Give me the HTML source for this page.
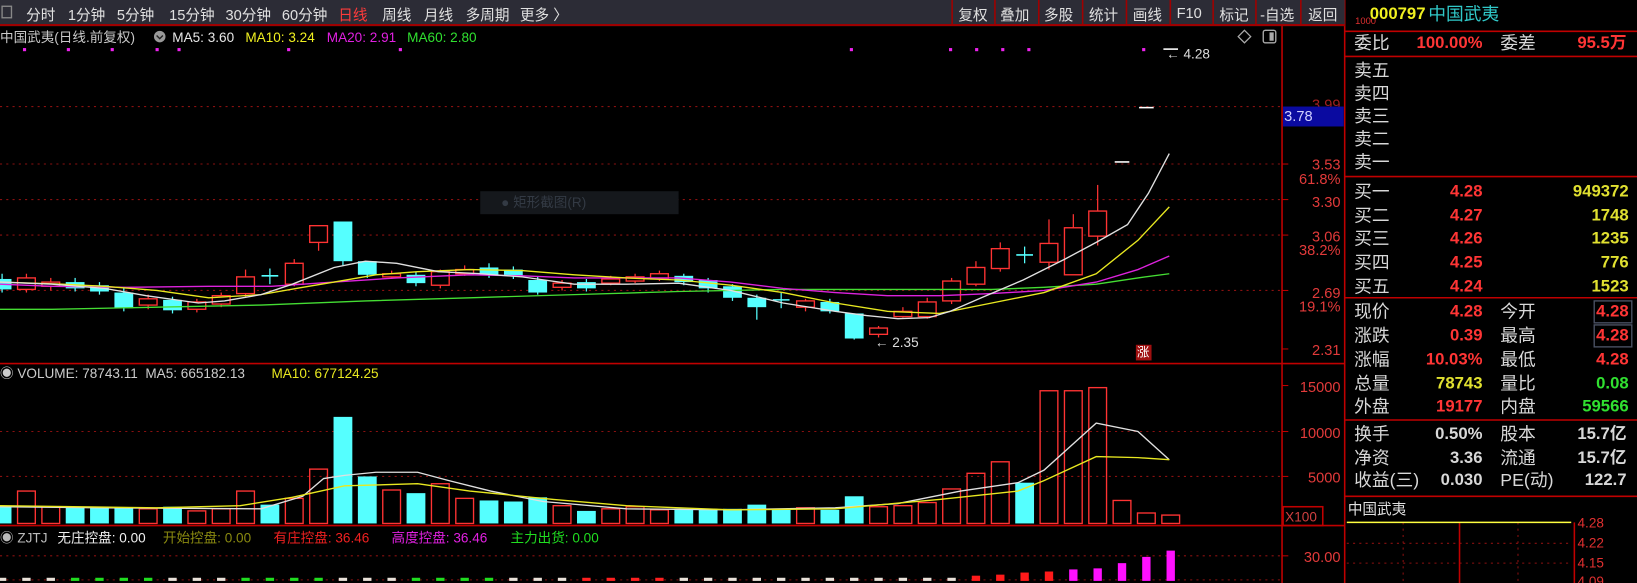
<!DOCTYPE html>
<html><head><meta charset="utf-8">
<style>
html,body{margin:0;padding:0;background:#000;overflow:hidden;width:1637px;height:583px}
#f{position:absolute;left:0;top:0;width:1568px;height:558px;transform:scale(1.04401,1.0448);transform-origin:0 0;background:#000;font-family:"Liberation Sans","Noto Sans CJK SC",sans-serif;overflow:hidden}
.t{position:absolute;white-space:nowrap;line-height:1}
#tb{position:absolute;left:0;top:0;width:1288px;height:23px;background:#2c2c36;border-bottom:2px solid #a00000}
#tb span{position:absolute;top:4px;font-size:14px;color:#e0e0e0;white-space:nowrap}
.ax{position:absolute;font-size:14px;color:#e23a3a;text-align:right;width:56px;left:1228px;line-height:1}
.rp{position:absolute;font-size:17px;color:#d8d8d8;line-height:1;white-space:nowrap}
.rv{position:absolute;font-size:16px;font-weight:bold;line-height:1;text-align:right;width:110px;white-space:nowrap}
</style></head><body>
<div id="f">
<svg id="sv" width="1568" height="558" style="position:absolute;left:0;top:0">
<g stroke="#8a1010" stroke-dasharray="2,4" stroke-width="1">
<line x1="0" y1="102" x2="1228" y2="102"/><line x1="0" y1="157" x2="1228" y2="157"/><line x1="0" y1="191" x2="1228" y2="191"/><line x1="0" y1="225" x2="1228" y2="225"/><line x1="0" y1="278" x2="1228" y2="278"/>
<line x1="0" y1="413" x2="1228" y2="413"/><line x1="0" y1="456" x2="1228" y2="456"/>
<line x1="0" y1="532" x2="1228" y2="532"/><line x1="0" y1="555" x2="1228" y2="555"/>
<line x1="1290" y1="520" x2="1505" y2="520"/><line x1="1290" y1="539" x2="1505" y2="539"/>
<line x1="1344" y1="500" x2="1344" y2="558"/><line x1="1454" y1="500" x2="1454" y2="558"/>
</g>
<g stroke="#c00000" stroke-width="1.5" fill="none">
<line x1="0" y1="348" x2="1288" y2="348"/><line x1="0" y1="503" x2="1288" y2="503"/>
<line x1="1228" y1="23" x2="1228" y2="558"/><line x1="1288" y1="0" x2="1288" y2="558"/>
<line x1="1288" y1="30" x2="1568" y2="30"/><line x1="1288" y1="54" x2="1568" y2="54"/><line x1="1288" y1="169" x2="1568" y2="169"/><line x1="1288" y1="285" x2="1568" y2="285"/><line x1="1288" y1="402" x2="1568" y2="402"/><line x1="1288" y1="475" x2="1568" y2="475"/>
<line x1="1398" y1="500" x2="1398" y2="558"/><line x1="1508" y1="500" x2="1508" y2="558"/>
<rect x="1229" y="485" width="38" height="18"/>
<g stroke-width="1"><line x1="1228" y1="157" x2="1234" y2="157"/><line x1="1228" y1="191" x2="1234" y2="191"/><line x1="1228" y1="225" x2="1234" y2="225"/><line x1="1228" y1="278" x2="1234" y2="278"/><line x1="1228" y1="334" x2="1234" y2="334"/><line x1="1228" y1="369" x2="1234" y2="369"/><line x1="1228" y1="413" x2="1234" y2="413"/><line x1="1228" y1="456" x2="1234" y2="456"/><line x1="1228" y1="532" x2="1234" y2="532"/></g>
</g>
<line x1="1290" y1="500" x2="1505" y2="500" stroke="#ffff40" stroke-width="1.5"/>
<rect x="460" y="183" width="190" height="22" fill="#15181c"/>
<g id="cand"></g>
<g fill="none" stroke-width="1.3">
<polyline stroke="#44dd33" points="0,296 50,296 150,294 250,292 350,288 450,285 550,282 650,279 750,277 850,277 950,277 1000,275 1050,272 1090,266 1120,262"/>
<polyline stroke="#dd22dd" points="0,272 50,274 120,275 200,274 260,274 320,270 380,266 450,263 500,264 550,266 650,266 700,270 750,276 800,280 850,283 900,283 950,281 1000,278 1050,270 1090,258 1120,245"/>
<polyline stroke="#e8e820" points="0,270 60,272 100,274 150,278 200,285 250,282 290,275 320,270 360,263 400,260 450,258 500,259 550,263 600,266 650,268 700,273 750,280 800,290 850,298 900,300 950,290 1000,280 1050,262 1090,230 1120,198"/>
<polyline stroke="#e0e0e0" points="0,270 50,272 100,276 140,283 190,290 215,288 250,282 280,272 320,256 350,250 380,252 420,260 460,262 500,265 550,272 600,272 650,271 700,278 750,290 800,298 830,302 860,305 890,304 910,298 940,285 980,268 1020,248 1050,232 1080,215 1100,185 1120,147"/>
<polyline stroke="#e0e0e0" points="0,485 100,486 250,487 290,475 310,458 330,455 360,452 400,452 430,460 470,470 520,480 600,487 700,488 800,486 860,482 920,470 975,462 1000,450 1050,405 1090,413 1120,440"/>
<polyline stroke="#e8e820" points="0,484 150,486 230,484 280,476 330,465 400,463 450,470 530,478 600,484 700,488 800,487 900,478 975,470 1000,460 1050,437 1090,438 1120,440"/>
</g>
<g fill="#ee22ee"><rect x="22" y="46" width="3" height="3"/><rect x="64" y="46" width="3" height="3"/><rect x="106" y="46" width="3" height="3"/><rect x="149" y="46" width="3" height="3"/><rect x="170" y="46" width="3" height="3"/><rect x="275" y="46" width="3" height="3"/><rect x="382" y="46" width="3" height="3"/><rect x="814" y="46" width="3" height="3"/><rect x="909" y="46" width="3" height="3"/><rect x="934" y="46" width="3" height="3"/><rect x="959" y="46" width="3" height="3"/><rect x="984" y="46" width="3" height="3"/><rect x="1094" y="46" width="3" height="3"/></g>
<path d="M1192 29 l6 6 -6 6 -6 -6z" fill="none" stroke="#aaa" stroke-width="1.2"/>
<rect x="1210" y="29" width="12" height="12" rx="2" fill="none" stroke="#aaa" stroke-width="1.3"/><rect x="1216" y="31" width="4" height="8" fill="#aaa"/>
<circle cx="153" cy="35" r="5.5" fill="#999"/><path d="M150 34 l3 3 3-3" stroke="#222" fill="none" stroke-width="1.3"/>
<rect x="1527" y="288" width="36" height="21" fill="none" stroke="#4b5264" stroke-width="1.3"/>
<rect x="1527" y="311" width="36" height="21" fill="none" stroke="#4b5264" stroke-width="1.3"/>
<rect x="1229" y="102" width="58" height="19" fill="#0a0aa0"/>
<rect x="1088" y="330" width="15" height="15" fill="#a01010"/>
</svg>

<div id="tb">
<span style="left:25px">分时</span><span style="left:65px">1分钟</span><span style="left:112px">5分钟</span><span style="left:162px">15分钟</span><span style="left:216px">30分钟</span><span style="left:270px">60分钟</span><span style="left:324px;color:#ff3b3b">日线</span><span style="left:366px">周线</span><span style="left:406px">月线</span><span style="left:446px">多周期</span><span style="left:498px">更多 〉</span>
<span style="left:918px">复权</span><span style="left:958px">叠加</span><span style="left:1000px">多股</span><span style="left:1043px">统计</span><span style="left:1085px">画线</span><span style="left:1127px">F10</span><span style="left:1168px">标记</span><span style="left:1207px">-自选</span><span style="left:1253px">返回</span>
</div>
<svg width="1288" height="23" style="position:absolute;left:0;top:0"><rect x="2" y="6" width="9" height="11" fill="none" stroke="#888" stroke-width="1.3"/><g stroke="#a00000" stroke-width="1.5"><line x1="912" y1="0" x2="912" y2="23"/><line x1="953" y1="0" x2="953" y2="23"/><line x1="995" y1="0" x2="995" y2="23"/><line x1="1037" y1="0" x2="1037" y2="23"/><line x1="1079" y1="0" x2="1079" y2="23"/><line x1="1121" y1="0" x2="1121" y2="23"/><line x1="1162" y1="0" x2="1162" y2="23"/><line x1="1203" y1="0" x2="1203" y2="23"/><line x1="1246" y1="0" x2="1246" y2="23"/></g></svg>

<div class="t" style="left:0;top:29px;font-size:13px;color:#c8c8c8">中国武夷(日线.前复权)</div>
<div class="t" style="left:165px;top:29px;font-size:13px;color:#e8e8e8">MA5: 3.60</div>
<div class="t" style="left:235px;top:29px;font-size:13px;color:#f0f020">MA10: 3.24</div>
<div class="t" style="left:313px;top:29px;font-size:13px;color:#e020e0">MA20: 2.91</div>
<div class="t" style="left:390px;top:29px;font-size:13px;color:#30e030">MA60: 2.80</div>
<div class="t" style="left:480px;top:187px;font-size:13px;color:#333a44">● 矩形截图(R)</div>
<div class="t" style="left:1117px;top:45px;font-size:13px;color:#ddd">← 4.28</div>
<div class="t" style="left:838px;top:321px;font-size:13px;color:#ddd">← 2.35</div>
<div class="t" style="left:1089px;top:331px;font-size:12px;color:#fff">涨</div>

<div class="ax" style="top:93px;color:#a02020">3.99</div>
<svg width="60" height="20" style="position:absolute;left:1229px;top:102px"><rect width="58" height="19" fill="#0a0aa0"/></svg>
<div class="t" style="left:1230px;top:104px;font-size:14px;color:#d0d0ff">3.78</div>
<div class="ax" style="top:150px">3.53</div><div class="ax" style="top:164px">61.8%</div>
<div class="ax" style="top:186px">3.30</div><div class="ax" style="top:219px">3.06</div><div class="ax" style="top:232px">38.2%</div>
<div class="ax" style="top:273px">2.69</div><div class="ax" style="top:286px">19.1%</div><div class="ax" style="top:328px">2.31</div>
<div class="ax" style="top:363px">15000</div><div class="ax" style="top:407px">10000</div><div class="ax" style="top:450px">5000</div>
<div class="t" style="left:1231px;top:488px;font-size:13px;color:#d04040">X100</div>
<div class="ax" style="top:526px">30.00</div>

<div class="t" style="left:0;top:351px;font-size:13px;color:#ccc">◉ VOLUME: 78743.11&nbsp; MA5: 665182.13</div>
<div class="t" style="left:260px;top:351px;font-size:13px;color:#e8e820">MA10: 677124.25</div>
<div class="t" style="left:0;top:508px;font-size:13px;color:#bbb">◉ ZJTJ</div>
<div class="t" style="left:55px;top:508px;font-size:13px;color:#f0f0f0">无庄控盘: 0.00</div>
<div class="t" style="left:156px;top:508px;font-size:13px;color:#8a8a10">开始控盘: 0.00</div>
<div class="t" style="left:262px;top:508px;font-size:13px;color:#ee2020">有庄控盘: 36.46</div>
<div class="t" style="left:375px;top:508px;font-size:13px;color:#e020e0">高度控盘: 36.46</div>
<div class="t" style="left:489px;top:508px;font-size:13px;color:#20dd20">主力出货: 0.00</div>

<div class="t" style="left:1298px;top:16px;font-size:9px;color:#e03030">1000</div>
<div class="t" style="left:1312px;top:6px;font-size:16px;font-weight:bold;color:#f0f020">000797</div>
<div class="t" style="left:1368px;top:5px;font-size:17px;color:#30c8c8">中国武夷</div>

<div class="rp" style="left:1297px;top:33px">委比</div>
<div class="rv" style="left:1310px;top:34px;color:#ff3535">100.00%</div>
<div class="rp" style="left:1437px;top:33px">委差</div>
<div class="rv" style="left:1448px;top:34px;color:#ff3535">95.5万</div>

<div class="rp" style="left:1297px;top:59px">卖五</div>
<div class="rp" style="left:1297px;top:81px">卖四</div>
<div class="rp" style="left:1297px;top:103px">卖三</div>
<div class="rp" style="left:1297px;top:125px">卖二</div>
<div class="rp" style="left:1297px;top:147px">卖一</div>

<div class="rp" style="left:1297px;top:175px">买一</div><div class="rv" style="left:1310px;top:176px;color:#ff3535">4.28</div><div class="rv" style="left:1450px;top:176px;color:#e0e030">949372</div>
<div class="rp" style="left:1297px;top:198px">买二</div><div class="rv" style="left:1310px;top:199px;color:#ff3535">4.27</div><div class="rv" style="left:1450px;top:199px;color:#e0e030">1748</div>
<div class="rp" style="left:1297px;top:220px">买三</div><div class="rv" style="left:1310px;top:221px;color:#ff3535">4.26</div><div class="rv" style="left:1450px;top:221px;color:#e0e030">1235</div>
<div class="rp" style="left:1297px;top:243px">买四</div><div class="rv" style="left:1310px;top:244px;color:#ff3535">4.25</div><div class="rv" style="left:1450px;top:244px;color:#e0e030">776</div>
<div class="rp" style="left:1297px;top:266px">买五</div><div class="rv" style="left:1310px;top:267px;color:#ff3535">4.24</div><div class="rv" style="left:1450px;top:267px;color:#e0e030">1523</div>

<div class="rp" style="left:1297px;top:290px">现价</div><div class="rv" style="left:1310px;top:291px;color:#ff3535">4.28</div><div class="rp" style="left:1437px;top:290px">今开</div><div class="rv" style="left:1450px;top:291px;color:#ff3535">4.28</div>
<div class="rp" style="left:1297px;top:313px">涨跌</div><div class="rv" style="left:1310px;top:314px;color:#ff3535">0.39</div><div class="rp" style="left:1437px;top:313px">最高</div><div class="rv" style="left:1450px;top:314px;color:#ff3535">4.28</div>
<div class="rp" style="left:1297px;top:336px">涨幅</div><div class="rv" style="left:1310px;top:337px;color:#ff3535">10.03%</div><div class="rp" style="left:1437px;top:336px">最低</div><div class="rv" style="left:1450px;top:337px;color:#ff3535">4.28</div>
<div class="rp" style="left:1297px;top:359px">总量</div><div class="rv" style="left:1310px;top:360px;color:#e0e030">78743</div><div class="rp" style="left:1437px;top:359px">量比</div><div class="rv" style="left:1450px;top:360px;color:#30e030">0.08</div>
<div class="rp" style="left:1297px;top:381px">外盘</div><div class="rv" style="left:1310px;top:382px;color:#ff3535">19177</div><div class="rp" style="left:1437px;top:381px">内盘</div><div class="rv" style="left:1450px;top:382px;color:#30e030">59566</div>

<div class="rp" style="left:1297px;top:407px">换手</div><div class="rv" style="left:1310px;top:408px;color:#d8d8d8">0.50%</div><div class="rp" style="left:1437px;top:407px">股本</div><div class="rv" style="left:1448px;top:408px;color:#d8d8d8">15.7亿</div>
<div class="rp" style="left:1297px;top:430px">净资</div><div class="rv" style="left:1310px;top:431px;color:#d8d8d8">3.36</div><div class="rp" style="left:1437px;top:430px">流通</div><div class="rv" style="left:1448px;top:431px;color:#d8d8d8">15.7亿</div>
<div class="rp" style="left:1297px;top:451px">收益(三)</div><div class="rv" style="left:1310px;top:452px;color:#d8d8d8">0.030</div><div class="rp" style="left:1437px;top:451px">PE(动)</div><div class="rv" style="left:1448px;top:452px;color:#d8d8d8">122.7</div>

<div class="t" style="left:1291px;top:480px;font-size:14px;color:#e0e0e0">中国武夷</div>
<div class="t" style="left:1511px;top:494px;font-size:13px;color:#e03030">4.28</div>
<div class="t" style="left:1511px;top:513px;font-size:13px;color:#e03030">4.22</div>
<div class="t" style="left:1511px;top:532px;font-size:13px;color:#e03030">4.15</div>
<div class="t" style="left:1511px;top:550px;font-size:13px;color:#e03030">4.09</div>
</div>
<script>
var C=[['c',267,277,262,280],['r',266,277,262,280],['r',270,274,266,278],['c',270,276,266,279],['c',273,279,270,282],['c',280,295,276,298],['r',286,292,282,296],['c',287,297,284,300],['r',289,296,286,299],['r',283,291,280,294],['r',265,281,258,284],['x',264,264,257,272],['r',252,272,248,274],['r',216,232,216,240],['c',212,250,212,254],['c',250,263,250,266],['r',262,265,259,267],['c',263,271,260,274],['r',260,273,258,276],['r',258,262,254,264],['c',256,263,252,266],['c',258,264,255,267],['c',268,280,265,282],['r',271,275,268,278],['c',270,276,267,279],['r',267,271,264,273],['r',265,269,262,271],['r',262,267,259,269],['c',264,270,262,273],['c',268,276,266,280],['c',274,285,272,288],['c',285,294,282,306],['x',287,287,280,295],['r',288,294,286,298],['c',289,298,286,300],['c',300,324,300,325],['r',314,320,312,323],['r',298,303,294,304],['r',289,303,285,305],['r',269,288,266,291],['r',256,272,250,274],['r',238,257,232,260],['x',244,244,236,252],['r',233,251,210,258],['r',218,263,205,263],['r',202,226,177,235],['d',155],['d',103],['d',47]];
var V=[484,470,485,485,485,486,487,485,489,487,470,483,477,449,399,456,469,472,463,477,479,480,476,484,489,487,485,488,487,487,487,483,488,486,488,475,485,484,481,468,453,442,462,374,374,371,479,491,493];
var h='',cy='#55ffff',rd='#ff3333';
for(var k=0;k<49;k++){var x=2+23.32*k,d=C[k],t=d[0];
if(t=='d'){h+='<line x1="'+(x-7)+'" y1="'+d[1]+'" x2="'+(x+7)+'" y2="'+d[1]+'" stroke="#fff" stroke-width="1.5"/>';}
else if(t=='x'){h+='<line x1="'+(x-8)+'" y1="'+d[1]+'" x2="'+(x+8)+'" y2="'+d[1]+'" stroke="'+cy+'" stroke-width="1.5"/><line x1="'+x+'" y1="'+d[3]+'" x2="'+x+'" y2="'+d[4]+'" stroke="'+cy+'" stroke-width="1.2"/>';}
else{var col=t=='c'?cy:rd;h+='<line x1="'+x+'" y1="'+d[3]+'" x2="'+x+'" y2="'+d[4]+'" stroke="'+col+'" stroke-width="1.2"/>';
if(t=='c')h+='<rect x="'+(x-9)+'" y="'+d[1]+'" width="18" height="'+Math.max(2,d[2]-d[1])+'" fill="'+cy+'"/>';
else h+='<rect x="'+(x-8.5)+'" y="'+d[1]+'" width="17" height="'+Math.max(2,d[2]-d[1])+'" fill="#000" stroke="'+rd+'" stroke-width="1.3"/>';}
var vc=(t=='c'||t=='x');
if(vc)h+='<rect x="'+(x-9)+'" y="'+V[k]+'" width="18" height="'+(501-V[k])+'" fill="'+cy+'"/>';
else h+='<rect x="'+(x-8.5)+'" y="'+V[k]+'" width="17" height="'+(501-V[k])+'" fill="none" stroke="'+rd+'" stroke-width="1.3"/>';
}
var Z={40:551,41:550,42:548,43:547};var M={44:545,45:544,46:539,47:533,48:527};
for(var k=0;k<49;k++){var x=2+23.32*k;
if(Z[k])h+='<rect x="'+(x-4)+'" y="'+Z[k]+'" width="8" height="'+(556-Z[k])+'" fill="#ff1a1a"/>';
else if(M[k])h+='<rect x="'+(x-4)+'" y="'+M[k]+'" width="8" height="'+(556-M[k])+'" fill="#ff10ff"/>';
else{var c=(k%7<3&&k<24)||(k>=28&&k<40)?'#e8e0d8':'#20dd20';if(k>=24&&k<28)c='#ff2020';h+='<rect x="'+(x-4)+'" y="553" width="8" height="3" fill="'+c+'"/>';}}
document.getElementById('cand').innerHTML=h;
</script>
</body></html>
